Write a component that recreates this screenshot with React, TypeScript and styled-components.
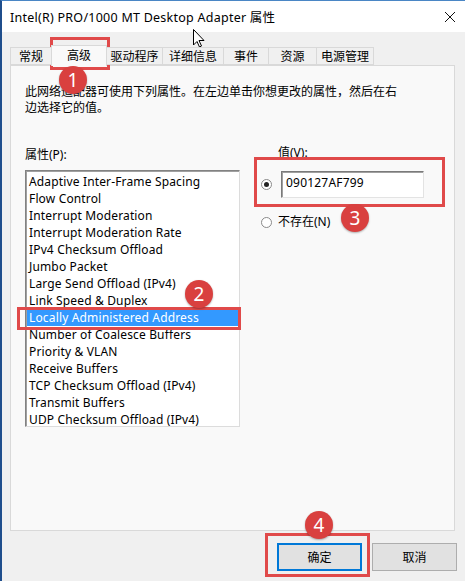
import React from 'react';
import styled, { createGlobalStyle } from 'styled-components';

const Global = createGlobalStyle`
  html, body { margin: 0; padding: 0; background: #f0f0f0; }
  body {
    width: 465px; height: 581px; overflow: hidden;
    font-family: "Noto Sans", "Noto Sans CJK SC", sans-serif;
    font-size: 12px; color: #000;
  }
  * { box-sizing: border-box; }
`;

const Root = styled.div`
  position: relative;
  width: 465px;
  height: 581px;
`;

const Window = styled.div`
  width: 465px;
  height: 581px;
  border-left: 2px solid #1f4e8c;
  border-top: 1px solid #4a86c5;
  background: #f0f0f0;
  display: flex;
  flex-direction: column;
`;

const TitleBar = styled.div`
  height: 31px;
  flex: none;
  background: #fff;
  display: flex;
  align-items: center;
  justify-content: space-between;
  padding: 0 9px 0 8px;
  font-size: 12.5px;
  letter-spacing: 0.25px;
`;

const Body = styled.div`
  flex: 1;
  display: flex;
  flex-direction: column;
  padding: 13px 10px 0 8px;
`;

const TabStrip = styled.div`
  display: flex;
  align-items: flex-end;
  height: 20px;
  position: relative;
  z-index: 1;
`;

const Tab = styled.div<{ $w: number; $active?: boolean }>`
  width: ${p => p.$w}px;
  height: ${p => (p.$active ? 21 : 18)}px;
  margin-bottom: ${p => (p.$active ? -1 : 0)}px;
  margin-right: -1px;
  border: 1px solid #d9d9d9;
  border-bottom: ${p => (p.$active ? 'none' : '1px solid #d9d9d9')};
  background: ${p => (p.$active ? '#f9f9f9' : '#f0f0f0')};
  display: flex;
  align-items: center;
  justify-content: center;
  font-size: 12px;
  padding-bottom: ${p => (p.$active ? 3 : 0)}px;
`;

const Panel = styled.div`
  height: 466px;
  border: 1px solid #d9d9d9;
  background: #f9f9f9;
  padding: 18px 14px 0 14px;
  display: flex;
  flex-direction: column;
`;

const Description = styled.div`
  line-height: 16px;
  font-size: 12px;
`;

const Columns = styled.div`
  display: flex;
  gap: 21px;
  margin-top: 31px;
`;

const LeftCol = styled.div`
  width: 215px;
  display: flex;
  flex-direction: column;
`;

const Label = styled.div`
  line-height: 16px;
  height: 16px;
`;

const ListBox = styled.div`
  margin-top: 7px;
  width: 215px;
  height: 257px;
  background: #fff;
  border-top: 1px solid #828282;
  border-left: 1px solid #828282;
  border-right: 1px solid #dcdcdc;
  border-bottom: 1px solid #dcdcdc;
  box-shadow: inset 1px 1px 0 #a0a0a0;
  padding: 2px 0 0 1px;
`;

const Item = styled.div<{ $selected?: boolean }>`
  height: 17px;
  line-height: 17px;
  padding-left: 2px;
  white-space: nowrap;
  font-size: 12px;
  letter-spacing: 0.15px;
  background: ${p => (p.$selected ? '#3399ff' : 'transparent')};
  color: ${p => (p.$selected ? '#fff' : '#000')};
`;

const RightCol = styled.div`
  flex: 1;
  display: flex;
  flex-direction: column;
`;

const ValueLabel = styled(Label)`
  margin: -2px 0 0 17px;
`;

const RadioRow = styled.div<{ $mt: number }>`
  display: flex;
  align-items: center;
  margin-top: ${p => p.$mt}px;
  gap: 9px;
`;

const Radio = styled.span<{ $checked?: boolean }>`
  flex: none;
  width: 11px;
  height: 11px;
  border-radius: 50%;
  border: 1px solid #8a8a8a;
  background: #fff;
  display: flex;
  align-items: center;
  justify-content: center;
  &::after {
    content: '';
    width: 5px;
    height: 5px;
    border-radius: 50%;
    background: ${p => (p.$checked ? '#222' : 'transparent')};
  }
`;

const TextInput = styled.div`
  width: 143px;
  height: 27px;
  background: #fff;
  border-top: 1px solid #7a7a7a;
  border-left: 1px solid #7a7a7a;
  border-right: 1px solid #e3e3e3;
  border-bottom: 1px solid #e3e3e3;
  box-shadow: inset 1px 1px 0 #a0a0a0;
  padding: 3px 0 0 4px;
  line-height: 16px;
  font-size: 12px;
  letter-spacing: 0.2px;
`;

const RadioText = styled.span`
  margin-left: -3px;
  line-height: 16px;
`;

const ButtonRow = styled.div`
  display: flex;
  justify-content: flex-end;
  gap: 10px;
  padding-top: 12px;
  margin-right: -2px;
`;

const Button = styled.div<{ $default?: boolean }>`
  width: 85px;
  height: 28px;
  background: #e1e1e1;
  border: ${p => (p.$default ? '2px solid #0078d7' : '1px solid #adadad')};
  display: flex;
  align-items: center;
  justify-content: center;
  font-size: 12px;
`;

const RedBox = styled.div<{ $x: number; $y: number; $w: number; $h: number }>`
  position: absolute;
  left: ${p => p.$x}px;
  top: ${p => p.$y}px;
  width: ${p => p.$w}px;
  height: ${p => p.$h}px;
  border: 3px solid #e04a4a;
  pointer-events: none;
`;

const Badge = styled.div<{ $cx: number; $cy: number }>`
  position: absolute;
  left: ${p => p.$cx - 14}px;
  top: ${p => p.$cy - 14}px;
  width: 28px;
  height: 28px;
  border-radius: 50%;
  background: #d9403f;
  box-shadow: 0 1px 2px rgba(0, 0, 0, 0.3);
  color: #fff;
  font-family: "Noto Sans", "Liberation Sans", sans-serif;
  font-size: 19px;
  display: flex;
  align-items: center;
  justify-content: center;
`;

const Cursor = styled.svg`
  position: absolute;
  left: 193px;
  top: 29px;
`;

const CloseIcon = () => (
  <svg width="12" height="12" viewBox="0 0 12 12">
    <path d="M1 1 L11 11 M11 1 L1 11" stroke="#111" strokeWidth="1" fill="none" />
  </svg>
);

const tabs: [string, number][] = [
  ['常规', 42],
  ['高级', 56],
  ['驱动程序', 57],
  ['详细信息', 62],
  ['事件', 46],
  ['资源', 49],
  ['电源管理', 58],
];

const items = [
  'Adaptive Inter-Frame Spacing',
  'Flow Control',
  'Interrupt Moderation',
  'Interrupt Moderation Rate',
  'IPv4 Checksum Offload',
  'Jumbo Packet',
  'Large Send Offload (IPv4)',
  'Link Speed & Duplex',
  'Locally Administered Address',
  'Number of Coalesce Buffers',
  'Priority & VLAN',
  'Receive Buffers',
  'TCP Checksum Offload (IPv4)',
  'Transmit Buffers',
  'UDP Checksum Offload (IPv4)',
];

export default function App() {
  return (
    <Root>
      <Global />
      <Window>
        <TitleBar>
          <span>Intel(R) PRO/1000 MT Desktop Adapter 属性</span>
          <CloseIcon />
        </TitleBar>
        <Body>
          <TabStrip>
            {tabs.map(([t, w]) => (
              <Tab key={t} $w={w} $active={t === '高级'}>
                {t}
              </Tab>
            ))}
          </TabStrip>
          <Panel>
            <Description>
              此网络适配器可使用下列属性。在左边单击你想更改的属性，然后在右
              <br />
              边选择它的值。
            </Description>
            <Columns>
              <LeftCol>
                <Label>属性(P):</Label>
                <ListBox>
                  {items.map(it => (
                    <Item key={it} $selected={it === 'Locally Administered Address'}>
                      {it}
                    </Item>
                  ))}
                </ListBox>
              </LeftCol>
              <RightCol>
                <ValueLabel>值(V):</ValueLabel>
                <RadioRow $mt={10}>
                  <Radio $checked />
                  <TextInput>090127AF799</TextInput>
                </RadioRow>
                <RadioRow $mt={16}>
                  <Radio />
                  <RadioText>不存在(N)</RadioText>
                </RadioRow>
              </RightCol>
            </Columns>
          </Panel>
          <ButtonRow>
            <Button $default>确定</Button>
            <Button>取消</Button>
          </ButtonRow>
        </Body>
      </Window>

      <RedBox $x={50} $y={37} $w={60} $h={33} />
      <RedBox $x={17} $y={307} $w={224} $h={23} />
      <RedBox $x={254} $y={157} $w={191} $h={50} />
      <RedBox $x={265} $y={533} $w={105} $h={44} />

      <Badge $cx={73} $cy={80}>1</Badge>
      <Badge $cx={199} $cy={294}>2</Badge>
      <Badge $cx={355} $cy={218}>3</Badge>
      <Badge $cx={319} $cy={525}>4</Badge>

      <Cursor width="12" height="19" viewBox="0 0 12 19">
        <path
          d="M0.5 0.5 L0.5 16 L4 12.5 L6.5 18 L8.5 17 L6 11.5 L11 11.5 Z"
          fill="#fff"
          stroke="#000"
          strokeWidth="1"
          strokeLinejoin="miter"
        />
      </Cursor>
    </Root>
  );
}
